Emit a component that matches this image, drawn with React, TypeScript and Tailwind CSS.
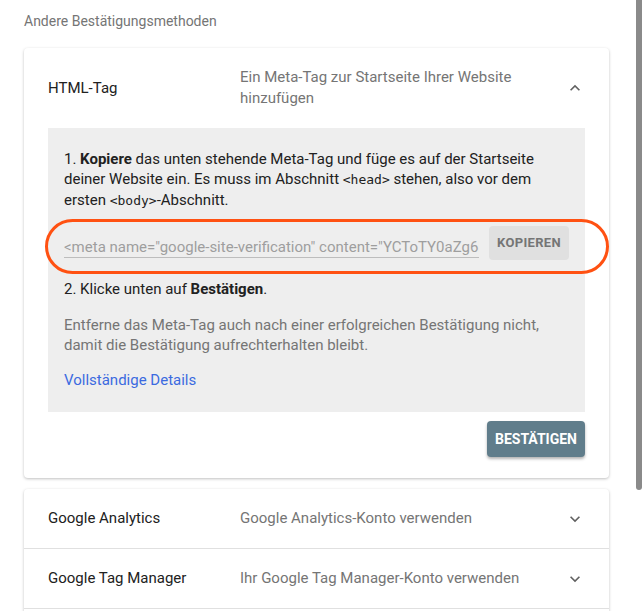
const font = { fontFamily: 'Roboto, "Noto Sans", sans-serif' }
const mono = { fontFamily: '"DejaVu Sans Mono", monospace' }

function Chevron({ up }: { up?: boolean }) {
  return (
    <svg viewBox="0 0 24 24" className={up ? 'w-5 h-5 fill-[#616161]' : 'w-5 h-5 fill-[#616161] rotate-180'}>
      <path d="M12 8l-6 6 1.41 1.41L12 10.83l4.59 4.58L18 14z" />
    </svg>
  )
}

function Row({ title, desc }: { title: string; desc: string }) {
  return (
    <div className="flex items-center h-[60px] pl-6 pr-6 border-b border-[#e0e0e0]">
      <div className="w-[192px] shrink-0 text-[15px] text-[#212121]">{title}</div>
      <div className="min-w-0 flex-1 text-[15px] text-[#757575]">{desc}</div>
      <Chevron />
    </div>
  )
}

export default function App() {
  return (
    <div className="flex h-[611px] bg-white overflow-hidden" style={font}>
      <div className="min-w-0 flex-1 pl-6 pr-[27px] pt-[11px]">
        <div className="text-sm text-[#757575] leading-5">Andere Bestätigungsmethoden</div>

        <div className="mt-[17px] bg-white rounded-sm shadow-[0_1px_3px_rgba(0,0,0,0.25)]">
          <div className="flex items-center pl-6 pr-6 pt-[19px] pb-[19px]">
            <div className="w-[192px] shrink-0 text-[15px] text-[#212121]">HTML-Tag</div>
            <div className="min-w-0 flex-1 pr-10 text-[15px] leading-[21px] text-[#757575]">
              Ein Meta-Tag zur Startseite Ihrer Website hinzufügen
            </div>
            <Chevron up />
          </div>

          <div className="mx-6 bg-[#eeeeee] px-4 pt-[21px] pb-[22px] text-[15px] leading-[20px] text-[#212121]">
            <p>
              1. <b>Kopiere</b> das unten stehende Meta-Tag und füge es auf der Startseite deiner Website ein. Es muss im
              Abschnitt <code className="text-[13px]" style={mono}>&lt;head&gt;</code> stehen, also vor dem ersten{' '}
              <code className="text-[13px]" style={mono}>&lt;body&gt;</code>-Abschnitt.
            </p>

            <div className="relative mt-[15px] flex items-center gap-[10px]">
              <div className="min-w-0 flex-1 overflow-hidden whitespace-nowrap border-b border-[#bdbdbd] pt-[8px] text-[#9e9e9e]">
                &lt;meta name="google-site-verification" content="YCToTY0aZg6Kx3pQ" /&gt;
              </div>
              <button className="h-[34px] w-[80px] shrink-0 rounded-sm bg-[#e0e0e0] text-[13px] font-bold tracking-wide text-[#757575]">
                KOPIEREN
              </button>
              <div className="pointer-events-none absolute -left-[19px] -right-[40px] -top-[7px] -bottom-[14px] rounded-full border-[3px] border-[#ff5112]" />
            </div>

            <p className="mt-[19px]">
              2. Klicke unten auf <b>Bestätigen</b>.
            </p>
            <p className="mt-[16px] text-[#757575]">
              Entferne das Meta-Tag auch nach einer erfolgreichen Bestätigung nicht, damit die Bestätigung aufrechterhalten bleibt.
            </p>
            <p className="mt-[15px] text-[#3b6ae0]">Vollständige Details</p>
          </div>

          <div className="flex justify-end px-6 pt-[9px] pb-[21px]">
            <button className="h-9 rounded bg-[#607d8b] px-2 text-[14px] font-bold text-white shadow-[0_2px_3px_rgba(0,0,0,0.3)]">
              BESTÄTIGEN
            </button>
          </div>
        </div>

        <div className="mt-[11px] bg-white rounded-sm shadow-[0_1px_3px_rgba(0,0,0,0.25)]">
          <Row title="Google Analytics" desc="Google Analytics-Konto verwenden" />
          <Row title="Google Tag Manager" desc="Ihr Google Tag Manager-Konto verwenden" />
          <Row title="Domainnamenanbieter" desc="Mit Ihrem Domainnamenanbieter verknüpfen" />
        </div>
      </div>
      <div className="w-[6px] shrink-0">
        <div className="h-[490px] w-full rounded-b-[3px] bg-[#8a8a8a]" />
      </div>
    </div>
  )
}
